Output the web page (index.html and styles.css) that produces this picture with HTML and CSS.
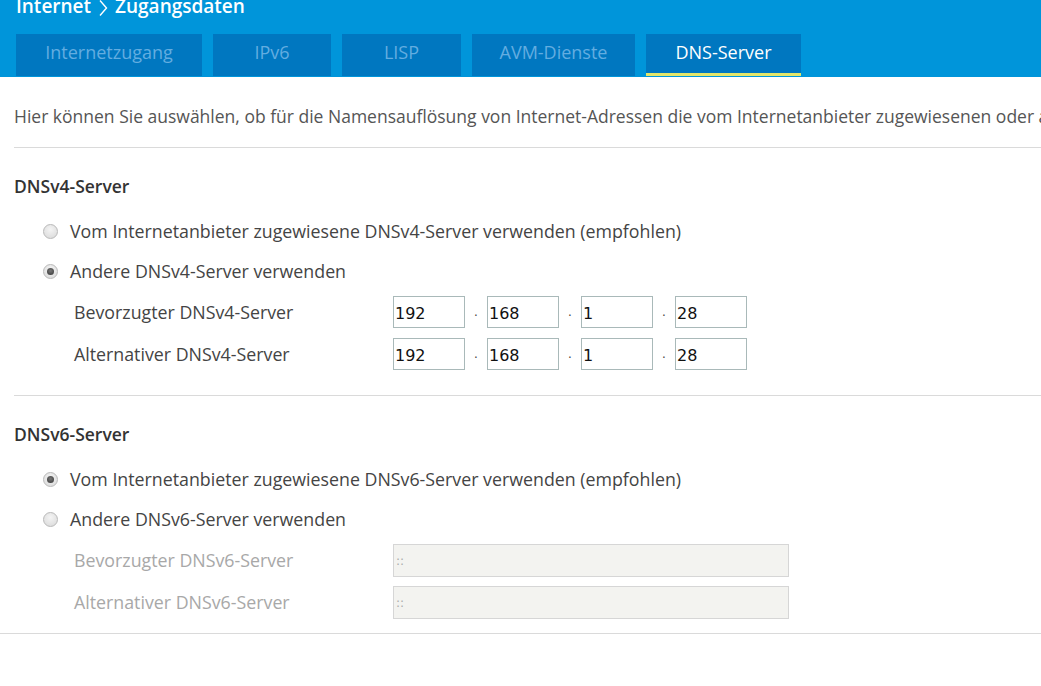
FILE: index.html
```html
<!DOCTYPE html>
<html lang="de">
<head>
<meta charset="utf-8">
<title>Internet &gt; Zugangsdaten</title>
<link rel="stylesheet" href="styles.css">
</head>
<body>
<header class="header">
  <div class="title">Internet <svg class="sep" width="10" height="18" viewBox="0 0 10 18"><path d="M2 1.5 L8.5 9 L2 16.5" fill="none" stroke="#ffffff" stroke-width="1.4"/></svg> Zugangsdaten</div>
  <nav class="tabs">
    <a class="tab t1">Internetzugang</a>
    <a class="tab t2">IPv6</a>
    <a class="tab t3">LISP</a>
    <a class="tab t4">AVM-Dienste</a>
    <a class="tab t5 active">DNS-Server</a>
  </nav>
</header>
<main class="main">
  <p class="intro">Hier können Sie auswählen, ob für die Namensauflösung von Internet-Adressen die vom Internetanbieter zugewiesenen oder andere DNS-Server verwendet werden sollen.</p>
  <hr class="rule">
  <section class="section">
    <h2 class="heading">DNSv4-Server</h2>
    <div class="options">
      <label class="radio-row"><span class="radio"></span>Vom Internetanbieter zugewiesene DNSv4-Server verwenden (empfohlen)</label>
      <label class="radio-row"><span class="radio checked"></span>Andere DNSv4-Server verwenden</label>
    </div>
    <div class="field-row">
      <span class="field-label">Bevorzugter DNSv4-Server</span>
      <div class="ip">
        <span class="octet">192</span><span class="dot">.</span>
        <span class="octet">168</span><span class="dot">.</span>
        <span class="octet">1</span><span class="dot">.</span>
        <span class="octet">28</span>
      </div>
    </div>
    <div class="field-row">
      <span class="field-label">Alternativer DNSv4-Server</span>
      <div class="ip">
        <span class="octet">192</span><span class="dot">.</span>
        <span class="octet">168</span><span class="dot">.</span>
        <span class="octet">1</span><span class="dot">.</span>
        <span class="octet">28</span>
      </div>
    </div>
  </section>
  <hr class="rule mid">
  <section class="section">
    <h2 class="heading">DNSv6-Server</h2>
    <div class="options v6">
      <label class="radio-row"><span class="radio checked"></span>Vom Internetanbieter zugewiesene DNSv6-Server verwenden (empfohlen)</label>
      <label class="radio-row"><span class="radio"></span>Andere DNSv6-Server verwenden</label>
    </div>
    <div class="field-row disabled">
      <span class="field-label">Bevorzugter DNSv6-Server</span>
      <span class="v6input">::</span>
    </div>
    <div class="field-row disabled">
      <span class="field-label">Alternativer DNSv6-Server</span>
      <span class="v6input">::</span>
    </div>
  </section>
  <hr class="rule full">
</main>
</body>
</html>
```

FILE: styles.css
```css
* { box-sizing: border-box; }
html, body { margin: 0; padding: 0; }
body {
  width: 1041px;
  height: 686px;
  overflow: hidden;
  background: #ffffff;
  font-family: "Open Sans", "Lato", sans-serif;
  color: #444;
}

.header {
  background: #0095da;
  height: 77px;
  padding: 0 0 1px 0;
  overflow: hidden;
}
.title {
  margin: -4px 0 0 16px;
  height: 20px;
  line-height: 20px;
  font-size: 19px;
  font-weight: 600;
  color: #ffffff;
  white-space: nowrap;
  display: flex;
  align-items: center;
  gap: 7px;
}
.title .sep { margin-top: 3px; }

.tabs {
  display: flex;
  gap: 11px;
  margin: 18px 0 0 16px;
}
.tab {
  height: 42px;
  display: flex;
  align-items: center;
  justify-content: center;
  background: #0077c0;
  color: #63ade0;
  font-size: 18px;
  white-space: nowrap;
  border-bottom: 3px solid transparent;
  padding-bottom: 4px;
}
.tab.active { color: #ffffff; border-bottom-color: #e3e66a; }
.t1 { width: 186px; }
.t2 { width: 118px; }
.t3 { width: 119px; }
.t4 { width: 163px; }
.t5 { width: 155px; }

.main { padding-left: 14px; }
.intro {
  margin: 27px 0 0 0;
  height: 24px;
  line-height: 24px;
  font-size: 17.5px;
  color: #555;
  white-space: nowrap;
  overflow: hidden;
}
.rule {
  margin: 19px 0 0 0;
  border: 0;
  border-top: 1px solid #dadada;
  height: 0;
}
.rule.mid { margin-top: 20px; }
.rule.full { margin: 10px 0 0 -14px; }

.heading {
  margin: 26px 0 0 0;
  height: 24px;
  line-height: 24px;
  font-size: 17.5px;
  font-weight: 600;
  color: #333;
}
.options { margin-top: 13px; }
.options.v6 { margin-top: 13px; }
.radio-row {
  height: 40px;
  display: flex;
  align-items: center;
  padding-left: 29px;
  font-size: 17.8px;
  color: #444;
  white-space: nowrap;
}
.radio {
  width: 15px;
  height: 15px;
  border-radius: 50%;
  border: 1px solid #b9b9b9;
  background: radial-gradient(circle at 50% 35%, #f4f4f4, #d8d8d8);
  margin-right: 12px;
  display: flex;
  align-items: center;
  justify-content: center;
}
.radio.checked::after {
  content: "";
  width: 7px;
  height: 7px;
  border-radius: 50%;
  background: radial-gradient(circle at 50% 40%, #777, #333);
}

.field-row {
  height: 42px;
  display: flex;
  align-items: center;
  padding-left: 60px;
}
.field-label {
  width: 319px;
  font-size: 17.8px;
  color: #444;
  white-space: nowrap;
}
.field-row.disabled .field-label { color: #a8a8a8; }

.ip { display: flex; align-items: center; }
.octet {
  width: 72px;
  height: 32px;
  border: 1px solid #a9b9b9;
  padding: 2px 0 0 1px;
  display: flex;
  align-items: center;
  font-family: "DejaVu Sans", sans-serif;
  font-size: 16px;
  color: #111;
}
.dot {
  width: 22px;
  text-align: center;
  font-family: "DejaVu Sans", sans-serif;
  font-size: 12px;
  color: #444;
}
.v6input {
  width: 396px;
  height: 33px;
  border: 1px solid #d6d6d6;
  background: #f3f3f0;
  padding: 2px 0 0 2px;
  display: flex;
  align-items: center;
  font-family: "DejaVu Sans", sans-serif;
  font-size: 12px;
  color: #aaa;
}
```
